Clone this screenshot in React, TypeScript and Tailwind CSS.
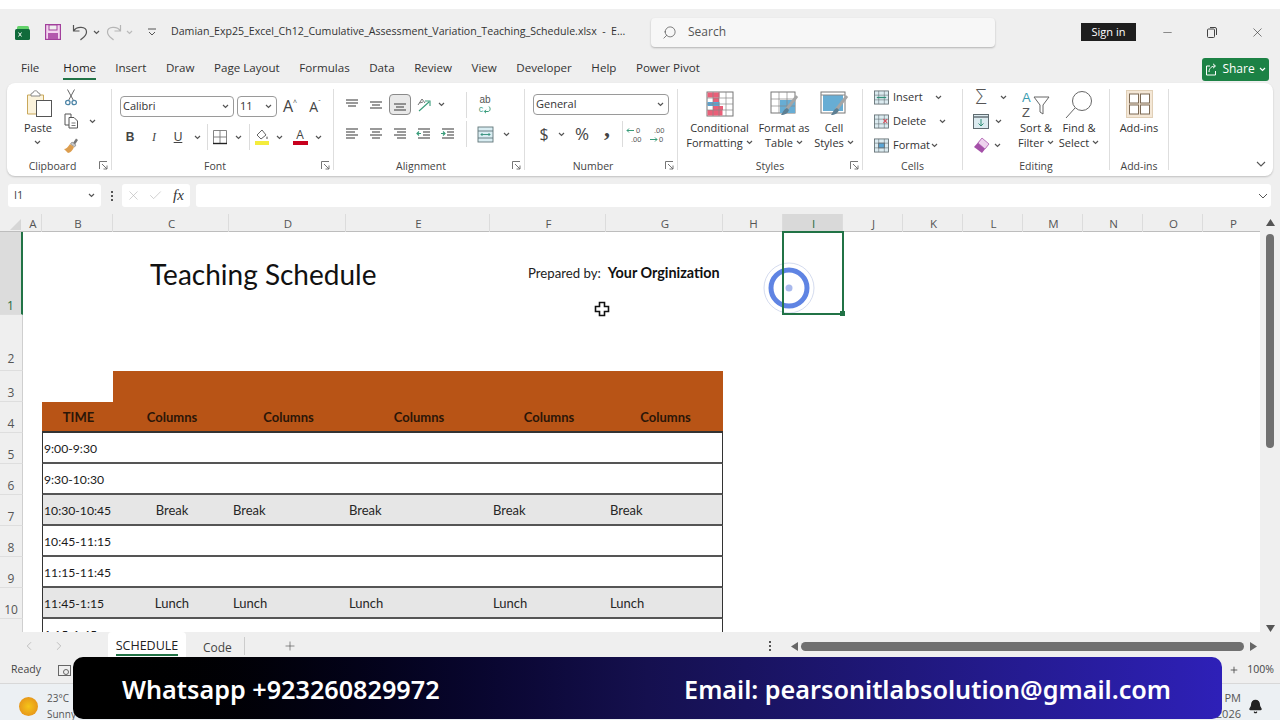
import type { ReactNode } from 'react';
import { Search, X, Minus, Check, ChevronLeft, ChevronRight, Plus, Bell } from 'lucide-react';

const COLS = 'grid grid-cols-[23px_19px_71px_116px_117px_144px_116px_117px_repeat(9,60px)]';
const BODY = 'col-span-6 grid grid-cols-[71px_116px_117px_144px_116px_117px] border-x border-[#333]';

function Chev({ className = 'text-[#555]' }: { className?: string }) {
  return (
    <svg width="7" height="5" viewBox="0 0 7 5" className={`shrink-0 ${className}`} fill="none" stroke="currentColor" strokeWidth="1.2">
      <path d="M1 1l2.5 2.5L6 1" />
    </svg>
  );
}

function Slot({ className, children }: { className: string; children?: ReactNode }) {
  return <div className={`flex items-center justify-center shrink-0 ${className}`}>{children}</div>;
}

function Sep() {
  return <div className="w-px h-[26px] bg-[#dcdcdc] shrink-0" />;
}

// horizontal text lines used by the alignment buttons
function Lines({ rows, accent }: { rows: number[][]; accent?: string }) {
  return (
    <svg width="16" height="14" viewBox="0 0 16 14" fill="none" stroke="#555" strokeWidth="1.2">
      {rows.map(([y, a, b], i) => (
        <path key={i} d={`M${a} ${y}H${b}`} />
      ))}
      {accent && <path d={accent} stroke="#3a9c7a" />}
    </svg>
  );
}

function SelectBox({ className, label }: { className: string; label: string }) {
  return (
    <div className={`h-[21px] flex items-center justify-between pl-[2px] pr-[4px] border border-[#9a9a9a] rounded-[4px] bg-white shrink-0 ${className}`}>
      <span className="text-[11px] text-[#333]">{label}</span>
      <Chev />
    </div>
  );
}

function Group({ className, label, labelClass = '', launcher, children }: { className: string; label: string; labelClass?: string; launcher?: boolean; children: ReactNode }) {
  return (
    <>
      <div className={`relative flex flex-col shrink-0 ${className}`}>
        <div className="flex-1 min-h-0">{children}</div>
        <div className={`h-[20px] pt-[1px] flex items-center justify-center text-[10.5px] text-[#444] ${labelClass}`}>{label}</div>
        {launcher && (
          <svg width="9" height="9" viewBox="0 0 9 9" className="absolute right-[3px] bottom-[6px]" fill="none" stroke="#666" strokeWidth="0.9">
            <path d="M0.5 8V0.5H8M3 3l5 5M8 4.5V8H4.5" />
          </svg>
        )}
      </div>
      <div className="w-px bg-[#dedede] my-[6px] shrink-0" />
    </>
  );
}

function BigButton({ className, icon, lines }: { className: string; icon: ReactNode; lines: ReactNode[] }) {
  return (
    <div className={`flex flex-col items-center pt-[7px] shrink-0 ${className}`}>
      <div className="h-[28px] flex items-center justify-center">{icon}</div>
      <div className="mt-[2px] flex flex-col items-center text-[11px] leading-[15px] text-[#333] whitespace-nowrap">
        {lines.map((l, i) => (
          <div key={i} className="flex items-center gap-[3px] h-[15px]">{l}</div>
        ))}
      </div>
    </div>
  );
}

function TableIcon({ fill, kind }: { fill: string; kind: 'cond' | 'table' | 'cell' }) {
  return (
    <svg width="30" height="26" viewBox="0 0 30 26" fill="none">
      {kind === 'cond' ? (
        <>
          <rect x="2" y="1" width="26" height="24" fill="#fff" stroke="#777" />
          <rect x="2.5" y="1.5" width="12" height="5" fill={fill} />
          <rect x="8" y="6.5" width="6" height="5" fill={fill} />
          <rect x="2.5" y="11" width="12" height="4" fill="#5aa6d6" />
          <rect x="8" y="15" width="10" height="4" fill={fill} />
          <rect x="2.5" y="19" width="15" height="5.5" fill={fill} />
          <path d="M8 1v24M14 1v24M21 1v24M2 7h26M2 13h26M2 19h26" stroke="#888" strokeWidth="0.7" />
        </>
      ) : (
        <>
          <rect x="2" y="1" width="24" height="21" fill="#fff" stroke="#777" />
          <rect x={kind === 'cell' ? 4 : 11} y={kind === 'cell' ? 4 : 9} width={kind === 'cell' ? 20 : 15} height={kind === 'cell' ? 16 : 13} fill={fill} />
          {kind === 'table' && <path d="M2 8h24M2 15h24M10 1v21M18 1v21" stroke="#888" strokeWidth="0.7" />}
          {kind === 'cell' && <path d="M2 4h24" stroke="#888" />}
          <path d="M28 5L17 19" stroke="#a5a5a5" strokeWidth="3" />
          <path d="M18 17c-3 1-4 4-6 7 4 0 7-2 8-5z" fill="#5d7f93" />
        </>
      )}
    </svg>
  );
}

function CellRow({ icon, label, textClass }: { icon: ReactNode; label: string; textClass: string }) {
  return (
    <div className="h-[24px] flex items-center pl-[11px]">
      <Slot className="w-[15px]">{icon}</Slot>
      <span className={`ml-[4px] text-[11px] text-[#333] shrink-0 ${textClass}`}>{label}</span>
      <Chev />
    </div>
  );
}

function GridIcon({ mark }: { mark: ReactNode }) {
  return (
    <svg width="16" height="15" viewBox="0 0 16 15" fill="none" stroke="#5f6b70" strokeWidth="0.9">
      <rect x="0.5" y="0.5" width="15" height="14" fill="#dcebf0" />
      <path d="M5 .5v14M11 .5v14M.5 5h15M.5 10h15" strokeWidth="0.6" />
      {mark}
    </svg>
  );
}

function Ribbon() {
  return (
    <div className="mx-[7px] h-[93px] bg-white rounded-[8px] shadow-[0_1px_2px_rgba(0,0,0,0.2)] flex font-['Open_Sans',sans-serif]">
      <Group className="w-[104px]" label="Clipboard" labelClass="pr-[13px]" launcher>
        <div className="flex">
          <BigButton
            className="w-[44px] ml-[9px]"
            icon={
              <svg width="27" height="30" viewBox="0 0 27 30" fill="none" className="ml-[2px]">
                <path d="M1.5 6h16v19h-16z" fill="#fbf3dc" stroke="#c9a85a" />
                <path d="M5 7V5c0-1 2-1 2-1 0-3 5-3 5 0 0 0 2 0 2 1v2z" fill="#fff" stroke="#888" />
                <rect x="10.5" y="11.5" width="15" height="16" fill="#fff" stroke="#555" />
              </svg>
            }
            lines={['Paste', <Chev key="c" />]}
          />
          <div className="w-[22px] pt-[2px]">
            <Slot className="h-[24px]">
              <svg width="12" height="17" viewBox="0 0 12 17" fill="none" stroke="#666" strokeWidth="1">
                <path d="M2.5 0.5l6 11M9.5 0.5l-6 11" />
                <circle cx="2.8" cy="13.5" r="2.2" stroke="#4f86a8" strokeWidth="1.3" />
                <circle cx="9.2" cy="13.5" r="2.2" stroke="#4f86a8" strokeWidth="1.3" />
              </svg>
            </Slot>
            <Slot className="h-[24px]">
              <svg width="15" height="16" viewBox="0 0 15 16" fill="#fff" stroke="#555" strokeWidth="1">
                <path d="M1 1h6v11H1z" />
                <path d="M5 4.5h5l3.5 3.5v7H5z" />
                <path d="M7.5 10h4M7.5 12.5h4" strokeWidth="0.8" />
              </svg>
            </Slot>
            <Slot className="h-[24px]">
              <svg width="16" height="17" viewBox="0 0 16 17" fill="none">
                <path d="M10 6l3-4.5 2 1.5-3 4.5z" fill="#777" />
                <path d="M9 5l4 3-1.5 2-4-3z" fill="#c9c9c9" stroke="#777" strokeWidth="0.6" />
                <path d="M7 7l4 3c-1 3-4 6-6 6l-4-4c2 0 4-2 6-5z" fill="#dc9d4e" />
              </svg>
            </Slot>
          </div>
          <div className="w-[20px] pt-[26px]">
            <Slot className="h-[24px]"><Chev /></Slot>
          </div>
        </div>
      </Group>

      <Group className="w-[221px]" label="Font" labelClass="pr-[15px]" launcher>
        <div className="pt-[11px] pl-[8px] flex items-center">
          <SelectBox className="w-[114px]" label="Calibri" />
          <SelectBox className="w-[40px] ml-[3px]" label="11" />
          <Slot className="w-[26px] text-[16px] text-[#444]">A<sup className="text-[7px]">^</sup></Slot>
          <Slot className="w-[24px] text-[14px] text-[#444]">A<sup className="text-[7px]">ˇ</sup></Slot>
        </div>
        <div className="mt-[8px] pl-[6px] h-[22px] flex items-center text-[#444]">
          <Slot className="w-[24px] text-[12px] font-bold font-['Liberation_Sans',sans-serif]">B</Slot>
          <Slot className="w-[24px] text-[12px] italic font-['Liberation_Serif',serif]">I</Slot>
          <Slot className="w-[24px] text-[12px] underline font-['Liberation_Sans',sans-serif]">U</Slot>
          <Slot className="w-[14px]"><Chev /></Slot>
          <Slot className="w-[6px]"><Sep /></Slot>
          <Slot className="w-[20px]">
            <svg width="16" height="16" viewBox="0 0 16 16" fill="none" stroke="#777" strokeWidth="0.9">
              <path d="M1.5 1.5h13v13M1.5 1.5v13M8 1.5v13M1.5 8h13" />
              <path d="M1 14.5h14" stroke="#222" strokeWidth="1.4" />
            </svg>
          </Slot>
          <Slot className="w-[16px]"><Chev /></Slot>
          <Slot className="w-[6px]"><Sep /></Slot>
          <Slot className="w-[20px]">
            <svg width="16" height="17" viewBox="0 0 16 17" fill="none">
              <path d="M8 1L3 6l4 4 5-4z" fill="#fff" stroke="#666" />
              <path d="M13 7c1 2 1 3 0 3s-1-1 0-3z" fill="#666" />
              <rect x="1" y="12" width="14" height="4" fill="#f4ec3c" />
            </svg>
          </Slot>
          <Slot className="w-[14px]"><Chev /></Slot>
          <Slot className="w-[28px]">
            <div className="flex flex-col items-center w-[15px]">
              <span className="text-[12px] leading-[12px] text-[#444]">A</span>
              <div className="h-[4px] w-[15px] bg-[#c8001e]" />
            </div>
          </Slot>
          <Slot className="w-[8px]"><Chev /></Slot>
        </div>
      </Group>

      <Group className="w-[190px]" label="Alignment" labelClass="pr-[16px]" launcher>
        <div className="pt-[11px] pl-[6px] h-[32px] flex items-center">
          <Slot className="w-[24px]"><Lines rows={[[2, 2, 14], [5, 2, 14], [8, 4, 12]]} /></Slot>
          <Slot className="w-[24px]"><Lines rows={[[4, 2, 14], [7, 4, 12], [10, 2, 14]]} /></Slot>
          <Slot className="w-[24px]">
            <div className="w-[22px] h-[21px] flex items-center justify-center rounded-[4px] border border-[#8a8a8a] bg-[#e9e9e9]">
              <Lines rows={[[6, 2, 14], [9, 4, 12], [12, 2, 14]]} />
            </div>
          </Slot>
          <Slot className="w-[24px]">
            <svg width="17" height="15" viewBox="0 0 17 15" fill="none" stroke="#666" strokeWidth="0.9">
              <path d="M2 8l4-6 3 4M3.5 6l3.5-1" />
              <path d="M3 14l10-9M9 4h5v5" stroke="#3a9c7a" strokeWidth="1.1" />
            </svg>
          </Slot>
          <Slot className="w-[10px]"><Chev /></Slot>
          <div className="w-[20px]" />
          <Sep />
          <Slot className="w-[36px]">
            <div className="flex flex-col items-center text-[#555]">
              <span className="text-[10px] leading-[10px] font-['Liberation_Sans',sans-serif]">ab</span>
              <div className="flex items-center h-[9px]">
                <span className="text-[9px] leading-[9px] text-[#3a9c7a] font-['Liberation_Sans',sans-serif]">c</span>
                <svg width="8" height="8" viewBox="0 0 8 8" fill="none" stroke="#3a9c7a">
                  <path d="M6 .5c2 2 1 5-1 5H1.5M3 3.8L1.3 5.5 3 7.2" />
                </svg>
              </div>
            </div>
          </Slot>
        </div>
        <div className="mt-[8px] pl-[6px] h-[22px] flex items-center">
          <Slot className="w-[24px]"><Lines rows={[[2, 2, 14], [5, 2, 11], [8, 2, 14], [11, 2, 11]]} /></Slot>
          <Slot className="w-[24px]"><Lines rows={[[2, 2, 14], [5, 4, 12], [8, 2, 14], [11, 4, 12]]} /></Slot>
          <Slot className="w-[24px]"><Lines rows={[[2, 2, 14], [5, 5, 14], [8, 2, 14], [11, 5, 14]]} /></Slot>
          <Slot className="w-[24px]"><Lines rows={[[2, 2, 14], [5, 7, 14], [8, 7, 14], [11, 2, 14]]} accent="M1 6.5h4M3 4.5l-2 2 2 2" /></Slot>
          <Slot className="w-[24px]"><Lines rows={[[2, 2, 14], [5, 7, 14], [8, 7, 14], [11, 2, 14]]} accent="M1 6.5h4M3 4.5l2 2-2 2" /></Slot>
          <div className="w-[6px]" />
          <Sep />
          <Slot className="w-[36px]">
            <svg width="17" height="17" viewBox="0 0 17 17" fill="#d9edf2" stroke="#5f7478" strokeWidth="0.9">
              <rect x="1" y="1" width="15" height="15" />
              <path d="M1 5h15M1 12h15" fill="none" />
              <path d="M4 8.5h9M5.5 7l-1.5 1.5L5.5 10M11.5 7l1.5 1.5L11.5 10" fill="none" stroke="#2f8f77" />
            </svg>
          </Slot>
          <Slot className="w-[6px]"><Chev /></Slot>
        </div>
      </Group>

      <Group className="w-[152px]" label="Number" labelClass="pr-[16px]" launcher>
        <div className="pt-[11px] pl-[8px]"><SelectBox className="w-[136px]" label="General" /></div>
        <div className="mt-[8px] pl-[7px] h-[22px] flex items-center text-[#444]">
          <Slot className="w-[24px] text-[16px]">$</Slot>
          <Slot className="w-[10px]"><Chev /></Slot>
          <Slot className="w-[32px] text-[17px]">%</Slot>
          <Slot className="w-[18px] h-[22px] text-[24px] font-bold leading-[10px] items-start font-['Liberation_Serif',serif]">,</Slot>
          <div className="w-[6px]" />
          <Sep />
          <Slot className="w-[23px]">
            <svg width="18" height="19" viewBox="0 0 18 19" fill="none" className="font-['Liberation_Sans',sans-serif]">
              <path d="M1 5.5h7M3 3.5l-2 2 2 2" stroke="#3a9c7a" />
              <text x="10" y="8" fontSize="7.5" fill="#555">0</text>
              <text x="5" y="17" fontSize="7.5" fill="#555">.00</text>
            </svg>
          </Slot>
          <Slot className="w-[24px]">
            <svg width="18" height="19" viewBox="0 0 18 19" fill="none" className="font-['Liberation_Sans',sans-serif]">
              <text x="5" y="8" fontSize="7.5" fill="#555">.00</text>
              <path d="M1 14.5h7M6 12.5l2 2-2 2" stroke="#3a9c7a" />
              <text x="10" y="17" fontSize="7.5" fill="#555">0</text>
            </svg>
          </Slot>
        </div>
      </Group>

      <Group className="w-[184px]" label="Styles" launcher>
        <div className="flex">
          <BigButton className="w-[83px]" icon={<TableIcon fill="#ea5f78" kind="cond" />} lines={['Conditional', <>Formatting <Chev /></>]} />
          <BigButton className="w-[46px]" icon={<TableIcon fill="#67add4" kind="table" />} lines={['Format as', <>Table <Chev /></>]} />
          <BigButton className="w-[54px]" icon={<TableIcon fill="#67add4" kind="cell" />} lines={['Cell', <>Styles <Chev /></>]} />
        </div>
      </Group>

      <Group className="w-[99px]" label="Cells">
        <div className="pt-[2px]">
          <CellRow textClass="w-[42px]" label="Insert" icon={<GridIcon mark={<path d="M3 7.5h10" stroke="#2f8f77" strokeWidth="1.4" />} />} />
          <CellRow textClass="w-[46px]" label="Delete" icon={<GridIcon mark={<path d="M10 5l4 4M14 5l-4 4" stroke="#d8505c" strokeWidth="1.2" />} />} />
          <CellRow textClass="w-[38px]" label="Format" icon={<GridIcon mark={<rect x="5" y="5" width="6" height="5" fill="#5aa6d6" />} />} />
        </div>
      </Group>

      <Group className="w-[146px]" label="Editing">
        <div className="flex">
          <div className="w-[50px] pt-[2px]">
            <div className="h-[24px] flex items-center pl-[9px]">
              <Slot className="w-[18px] text-[20px] font-light text-[#555]">Σ</Slot>
              <Slot className="w-[26px]"><Chev /></Slot>
            </div>
            <div className="h-[24px] flex items-center pl-[9px]">
              <Slot className="w-[18px]">
                <svg width="16" height="15" viewBox="0 0 16 15" fill="#dcebf0" stroke="#5f6b70">
                  <rect x="0.5" y="0.5" width="15" height="14" />
                  <path d="M1 3h14" strokeWidth="1.4" />
                  <path d="M8 5v7M5.5 9.5L8 12l2.5-2.5" fill="none" stroke="#2f8f77" />
                </svg>
              </Slot>
              <Slot className="w-[16px]"><Chev /></Slot>
            </div>
            <div className="h-[24px] flex items-center pl-[9px]">
              <Slot className="w-[18px]">
                <svg width="17" height="17" viewBox="0 0 17 17">
                  <path d="M9 1l7 6-7 9-8-6z" fill="#a44fa8" />
                  <path d="M9 1l7 6-4 5-7-6z" fill="#eed2ee" stroke="#a44fa8" strokeWidth="0.6" />
                </svg>
              </Slot>
              <Slot className="w-[14px]"><Chev /></Slot>
            </div>
          </div>
          <BigButton
            className="w-[46px]"
            icon={
              <svg width="28" height="30" viewBox="0 0 28 30" fill="none" className="font-['Liberation_Sans',sans-serif]">
                <text x="0" y="13" fontSize="13" fill="#3a9cb0">A</text>
                <text x="0" y="28" fontSize="13" fill="#555">Z</text>
                <path d="M12 8h15l-6 8v9l-3-2v-7z" fill="#fff" stroke="#666" />
              </svg>
            }
            lines={['Sort &', <>Filter <Chev /></>]}
          />
          <BigButton
            className="w-[40px]"
            icon={
              <svg width="28" height="29" viewBox="0 0 28 29" fill="none" stroke="#666">
                <circle cx="17" cy="11" r="9.5" />
                <path d="M10 18L1 28" />
              </svg>
            }
            lines={['Find &', <>Select <Chev /></>]}
          />
        </div>
      </Group>

      <Group className="w-[58px]" label="Add-ins">
        <BigButton
          className="w-[58px]"
          icon={
            <svg width="27" height="28" viewBox="0 0 27 28" fill="#fff" stroke="#7d6a55">
              <rect x="0.5" y="0.5" width="26" height="27" fill="#f4e7d6" stroke="#e0cfb6" />
              <rect x="3.5" y="4" width="9" height="9" />
              <rect x="14.5" y="4" width="9" height="9" />
              <rect x="3.5" y="15" width="9" height="9" />
              <rect x="14.5" y="15" width="9" height="9" />
            </svg>
          }
          lines={['Add-ins']}
        />
      </Group>

      <div className="ml-auto self-end mb-[9px] mr-[7px]">
        <svg width="10" height="6" viewBox="0 0 10 6" fill="none" stroke="#555" strokeWidth="1.1"><path d="M1 1l4 4 4-4" /></svg>
      </div>
    </div>
  );
}

function TitleBar() {
  return (
    <div className="h-[46px] flex items-center pl-[15px] font-['Open_Sans',sans-serif] shrink-0">
      <svg width="15" height="15" viewBox="0 0 15 15" className="shrink-0 mt-[2px]">
        <rect x="2" y="0" width="12" height="8" rx="1.5" fill="#63d26b" />
        <rect x="0" y="3" width="15" height="11" rx="1.5" fill="#106b3b" />
        <path d="M3.5 6.5l3 4M6.5 6.5l-3 4" stroke="#eef7f1" strokeWidth="1" />
      </svg>
      <svg width="16" height="16" viewBox="0 0 16 16" className="ml-[15px] shrink-0">
        <rect x="0.5" y="0.5" width="15" height="15" fill="#f3d4ef" stroke="#a2409c" strokeWidth="1.4" />
        <rect x="4" y="1" width="8" height="5" fill="#efefef" stroke="#a2409c" />
        <rect x="3" y="9" width="10" height="6" fill="#b358ad" />
      </svg>
      <svg width="17" height="18" viewBox="0 0 17 18" fill="none" stroke="#555" strokeWidth="1.2" className="ml-[11px] shrink-0">
        <path d="M1.5 2v6h6M1.5 8c3-5 13-5 13 1 0 4-4 6-6 8" />
      </svg>
      <Slot className="w-[14px]"><Chev /></Slot>
      <svg width="17" height="18" viewBox="0 0 17 18" fill="none" stroke="#b5b5b5" strokeWidth="1.2" className="ml-[2px] shrink-0">
        <path d="M15.5 2v6h-6M15.5 8c-3-5-13-5-13 1 0 4 4 6 6 8" />
      </svg>
      <Slot className="w-[14px]"><Chev className="text-[#bbb]" /></Slot>
      <svg width="8" height="8" viewBox="0 0 8 8" fill="none" stroke="#555" className="ml-[12px] shrink-0">
        <path d="M0 1h8M1 4l3 3 3-3" />
      </svg>
      <div className="ml-[15px] w-[460px] text-[10.6px] text-[#333] whitespace-nowrap overflow-hidden">
        Damian_Exp25_Excel_Ch12_Cumulative_Assessment_Variation_Teaching_Schedule.xlsx&nbsp; - &nbsp;E...
      </div>
      <div className="ml-[20px] w-[344px] h-[29px] bg-[#f7f7f7] rounded-[4px] shadow-[0_1px_2px_rgba(0,0,0,0.25)] flex items-center pl-[11px] gap-[11px] shrink-0">
        <Search size={15} strokeWidth={1.2} className="text-[#555] -scale-x-100" />
        <span className="text-[12px] text-[#555]">Search</span>
      </div>
      <div className="ml-[86px] w-[55px] h-[18px] bg-[#1e1e1e] text-white text-[11px] flex items-center justify-center shrink-0">Sign in</div>
      <Slot className="ml-[16px] w-[30px]"><Minus size={13} strokeWidth={1.1} className="text-[#444]" /></Slot>
      <Slot className="ml-[15px] w-[30px]">
        <svg width="10" height="11" viewBox="0 0 10 11" fill="none" stroke="#444"><rect x="0.5" y="2" width="7" height="8.5" rx="1" /><path d="M3 .5h5a1.5 1.5 0 0 1 1.5 1.5v6" /></svg>
      </Slot>
      <Slot className="ml-[15px] w-[30px]"><X size={15} strokeWidth={1} className="text-[#333]" /></Slot>
    </div>
  );
}

function MenuBar() {
  const tabs = ['Insert', 'Draw', 'Page Layout', 'Formulas', 'Data', 'Review', 'View', 'Developer', 'Help', 'Power Pivot'];
  return (
    <div className="h-[28px] flex items-center pl-[21px] text-[11.6px] text-[#333] font-['Open_Sans',sans-serif] shrink-0">
      <span className="pb-[2px]">File</span>
      <span className="relative ml-[24px] pb-[2px] font-medium text-[#222]">
        Home
        <span className="absolute left-0 right-0 top-[19px] h-[2px] bg-[#217346]" />
      </span>
      <div className="ml-[19px] pb-[2px] flex gap-[19.5px]">
        {tabs.map((t) => (
          <span key={t}>{t}</span>
        ))}
      </div>
      <div className="ml-auto mr-[11px] w-[67px] h-[23px] rounded-[3px] bg-[#1c8245] text-white flex items-center justify-center gap-[4px] text-[12px]">
        <svg width="13" height="13" viewBox="0 0 13 13" fill="none" stroke="#fff" strokeWidth="1">
          <path d="M5 3H1.5v9h9V8M4 9c0-4 3-6 6-6M8 .8L10.5 3 8 5.2" />
        </svg>
        Share
        <Chev className="text-white" />
      </div>
    </div>
  );
}

function FormulaBar() {
  return (
    <div className="h-[38px] flex items-start pt-[8px] pl-[8px] font-['Open_Sans',sans-serif] shrink-0">
      <div className="w-[93px] h-[23px] bg-white rounded-[3px] flex items-center justify-between pl-[6px] pr-[6px] text-[11px] text-[#444]">
        I1
        <Chev />
      </div>
      <div className="ml-[9px] w-[3px] h-[23px] flex flex-col items-center justify-center gap-[2px]">
        <i className="size-[2px] bg-[#555]" />
        <i className="size-[2px] bg-[#555]" />
        <i className="size-[2px] bg-[#555]" />
      </div>
      <div className="ml-[9px] w-[68px] h-[23px] bg-white rounded-[3px] flex items-center pl-[4px]">
        <X size={15} strokeWidth={1} className="text-[#b5b5b5]" />
        <Check size={15} strokeWidth={1} className="ml-[7px] text-[#b5b5b5]" />
        <span className="ml-[10px] italic text-[15px] text-[#333] font-['Liberation_Serif',serif]">fx</span>
      </div>
      <div className="ml-[6px] w-[1075px] h-[23px] bg-white rounded-[3px] flex items-center justify-end pr-[3px]">
        <svg width="10" height="6" viewBox="0 0 10 6" fill="none" stroke="#555"><path d="M1 1l4 4 4-4" /></svg>
      </div>
    </div>
  );
}

function RowNum({ n, active, pad = 'pb-[1px]' }: { n: number; active?: boolean; pad?: string }) {
  return (
    <div className={`flex items-end justify-center text-[12px] leading-[14px] font-['Open_Sans',sans-serif] ${pad} ${active ? 'bg-[#dcdcdc] text-[#1e6b3c] border-r-2 border-[#217346]' : 'bg-[#efefef] text-[#555] border-r border-[#cfcfcf]'} border-b border-b-[#dedede]`}>
      {n}
    </div>
  );
}

function TableRow({ n, time, value, shaded }: { n: number; time: string; value?: string; shaded?: boolean }) {
  const bg = shaded ? 'bg-[#e6e6e6]' : 'bg-white';
  return (
    <div className={`${COLS} h-[31px]`}>
      <RowNum n={n} />
      <div />
      <div className={`${BODY} border-b-2 border-b-[#555] ${bg} items-center pt-[2px] text-[13px] text-[#262626]`}>
        <div className="pl-[1px] pt-[1px] text-[12.2px] text-[#1a1a1a] whitespace-nowrap">{time}</div>
        <div className="text-center">{value}</div>
        <div className="pl-[3px]">{value}</div>
        <div className="pl-[2px]">{value}</div>
        <div className="pl-[2px]">{value}</div>
        <div className="pl-[3px]">{value}</div>
      </div>
    </div>
  );
}

function Sheet() {
  const letters = ['A', 'B', 'C', 'D', 'E', 'F', 'G', 'H', 'I', 'J', 'K', 'L', 'M', 'N', 'O', 'P'];
  return (
    <div className="h-[418px] flex shrink-0">
      <div className="relative w-[1260px] overflow-hidden font-['Lato',sans-serif]">
        <div className={`${COLS} h-[18px] bg-[#efefef] border-b border-[#bdbdbd] font-['Open_Sans',sans-serif]`}>
          <div className="flex items-end justify-end pr-[2px] pb-[2px]">
            <svg width="11" height="11" viewBox="0 0 11 11"><path d="M11 0v11H0z" fill="#d6d6d6" /></svg>
          </div>
          {letters.map((c) => (
            <div
              key={c}
              className={`flex items-center justify-center pl-[2px] pt-[1px] text-[11.5px] border-r border-[#dcdcdc] ${c === 'I' ? 'bg-[#d9d9d9] text-[#1e6b3c]' : 'text-[#555]'}`}
            >
              {c}
            </div>
          ))}
        </div>

        <div className="bg-white">
          <div className={`${COLS} h-[83px]`}>
            <RowNum n={1} active />
            <div className="col-span-5 pl-[127px] pt-[26px] text-[28px] leading-[32px] text-[#111] whitespace-nowrap">Teaching Schedule</div>
            <div className="col-span-2 pl-[38px] pt-[33px] text-[13.2px] leading-[16px] text-[#222] whitespace-nowrap">
              Prepared by:<b className="ml-[7px] text-[14.4px] text-[#111]">Your Orginization</b>
            </div>
            <div />
            <div className="relative z-10 -ml-[1px] -mr-[1px] -mt-[1px] border-2 border-[#217346]">
              <div className="absolute -right-[3px] -bottom-[3px] size-[5px] bg-[#217346]" />
            </div>
          </div>
          <div className={`${COLS} h-[56px]`}>
            <RowNum n={2} pad="pb-[4px]" />
          </div>
          <div className={`${COLS} h-[31px]`}>
            <RowNum n={3} />
            <div className="col-span-2" />
            <div className="col-span-5 bg-[#b85416]" />
          </div>
          <div className={`${COLS} h-[31px]`}>
            <RowNum n={4} />
            <div />
            <div className="col-span-6 grid grid-cols-[71px_116px_117px_144px_116px_117px] items-center pt-[3px] pl-[1px] bg-[#b85416] border-b-2 border-b-[#333] text-center text-[13px] font-bold text-[#2b1608]">
              <div>TIME</div>
              <div>Columns</div>
              <div>Columns</div>
              <div>Columns</div>
              <div>Columns</div>
              <div>Columns</div>
            </div>
          </div>
          <TableRow n={5} time="9:00-9:30" />
          <TableRow n={6} time="9:30-10:30" />
          <TableRow n={7} time="10:30-10:45" value="Break" shaded />
          <TableRow n={8} time="10:45-11:15" />
          <TableRow n={9} time="11:15-11:45" />
          <TableRow n={10} time="11:45-1:15" value="Lunch" shaded />
          <TableRow n={11} time="1:15-1:45" />
        </div>

        {/* click highlight from the screen recorder and the cell cursor */}
        <svg width="52" height="52" viewBox="0 0 52 52" fill="none" className="absolute left-[763px] top-[48px]">
          <circle cx="26" cy="26" r="25" fill="#fff" fillOpacity="0.5" stroke="#d5dcef" />
          <circle cx="26" cy="26" r="18" stroke="#5f84e3" strokeWidth="5" />
          <circle cx="26" cy="26" r="3.5" fill="#a9b9ec" />
        </svg>
        <svg width="16" height="16" viewBox="0 0 16 16" className="absolute left-[594px] top-[87px]">
          <path d="M5.5 1.5h5v4h4v5h-4v4h-5v-4h-4v-5h4z" fill="#fff" stroke="#111" strokeWidth="1.6" />
        </svg>
      </div>

      <div className="flex-1 flex flex-col items-center pt-[5px]">
        <svg width="9" height="7" viewBox="0 0 9 7"><path d="M4.5 0L9 7H0z" fill="#555" /></svg>
        <div className="mt-[8px] w-[8px] h-[214px] rounded-full bg-[#707070]" />
        <svg width="9" height="7" viewBox="0 0 9 7" className="mt-[177px]"><path d="M4.5 7L9 0H0z" fill="#555" /></svg>
      </div>
    </div>
  );
}

function SheetTabs() {
  return (
    <div className="h-[25px] pt-[3px] flex items-center font-['Open_Sans',sans-serif] shrink-0">
      <ChevronLeft size={14} strokeWidth={1.2} className="ml-[22px] text-[#aaa]" />
      <ChevronRight size={14} strokeWidth={1.2} className="ml-[16px] text-[#aaa]" />
      <div className="ml-[42px] w-[78px] h-[25px] -mt-[3px] bg-white rounded-t-[4px] flex justify-center">
        <span className="h-[24px] text-[12.5px] font-medium leading-[27px] text-[#222] border-b-2 border-[#217346]">SCHEDULE</span>
      </div>
      <span className="ml-[17px] text-[12px] text-[#444] pt-[3px]">Code</span>
      <div className="ml-[12px] w-px h-[18px] bg-[#ccc]" />
      <Plus size={14} strokeWidth={1} className="ml-[38px] text-[#444]" />
      <div className="ml-[472px] flex flex-col gap-[2px]">
        <i className="size-[2px] bg-[#555]" />
        <i className="size-[2px] bg-[#555]" />
        <i className="size-[2px] bg-[#555]" />
      </div>
      <svg width="7" height="9" viewBox="0 0 7 9" className="ml-[20px]"><path d="M0 4.5L7 0v9z" fill="#666" /></svg>
      <div className="ml-[3px] w-[443px] h-[9px] rounded-full bg-[#707070]" />
      <svg width="7" height="9" viewBox="0 0 7 9" className="ml-[6px]"><path d="M7 4.5L0 0v9z" fill="#666" /></svg>
    </div>
  );
}

function StatusBar() {
  return (
    <div className="h-[27px] flex items-center pl-[11px] pr-[6px] text-[10.5px] text-[#444] font-['Open_Sans',sans-serif] border-b border-[#d8d8d8] shrink-0">
      <span>Ready</span>
      <svg width="13" height="13" viewBox="0 0 13 13" fill="none" stroke="#666" className="ml-[17px]">
        <rect x="0.5" y="1.5" width="12" height="10" />
        <circle cx="8" cy="8" r="2.5" />
      </svg>
      <Plus size={10} className="ml-auto mr-[8px]" />
      <span>100%</span>
    </div>
  );
}

function Taskbar() {
  return (
    <div className="flex-1 flex items-center justify-between bg-[#ecf0f3] pt-[6px] pl-[19px] pr-[17px] text-[10px] leading-[16px] text-[#555] font-['Open_Sans',sans-serif]">
      <div className="flex items-center gap-[9px]">
        <div className="size-[19px] rounded-full bg-radial from-[#f5c518] to-[#e0851a]" />
        <div>
          <div>23°C</div>
          <div>Sunny</div>
        </div>
      </div>
      <div className="flex items-center gap-[4px]">
        <div className="text-right text-[11px]">
          <div>12:41 PM</div>
          <div>1/19/2026</div>
        </div>
        <Bell size={15} className="ml-[3px] text-[#222]" fill="#222" />
      </div>
    </div>
  );
}

export default function App() {
  return (
    <div className="relative w-[1280px] h-[720px] overflow-hidden bg-[#efefef] flex flex-col">
      <div className="h-[9px] bg-white shrink-0" />
      <TitleBar />
      <MenuBar />
      <Ribbon />
      <FormulaBar />
      <Sheet />
      <SheetTabs />
      <StatusBar />
      <Taskbar />

      {/* promo banner laid over the recording */}
      <div className="absolute left-[73px] top-[657px] w-[1149px] h-[62px] rounded-[10px] bg-linear-to-r from-[#000000] via-[#15104f] to-[#2e20b8] flex items-center justify-between pt-[3px] pl-[49px] pr-[51px] text-white text-[25.2px] font-semibold font-['Noto_Sans',sans-serif]">
        <span>Whatsapp +923260829972</span>
        <span>Email: pearsonitlabsolution@gmail.com</span>
      </div>
    </div>
  );
}
